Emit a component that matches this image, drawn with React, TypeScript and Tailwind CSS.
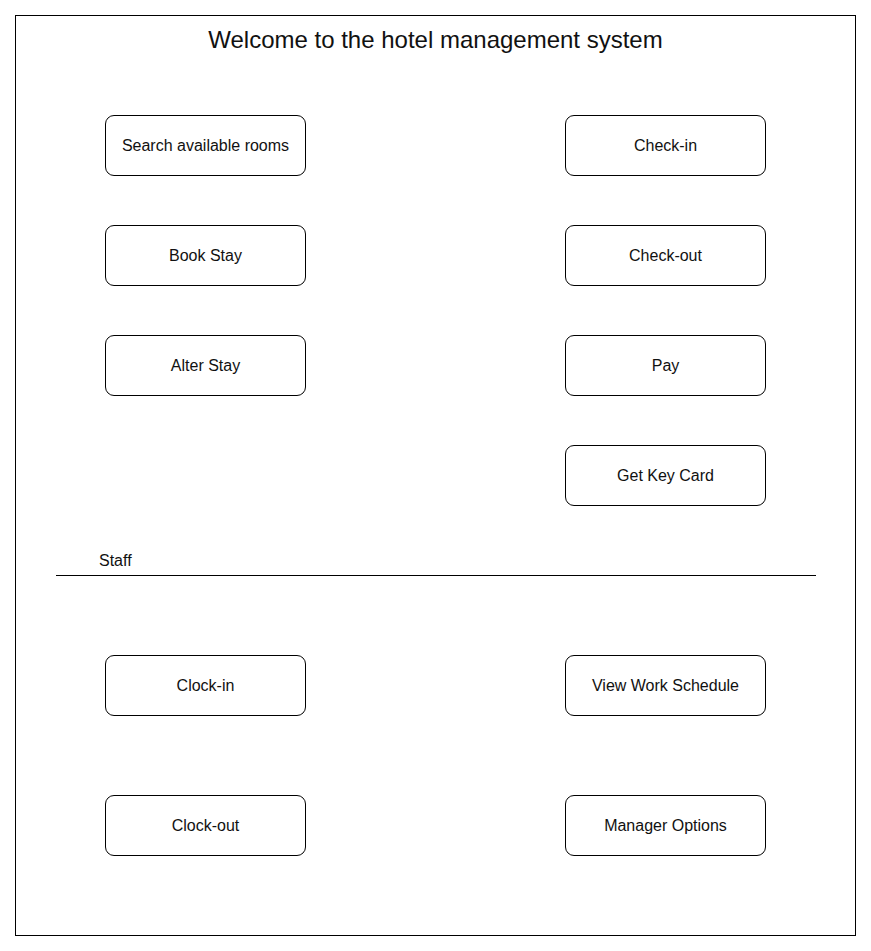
import React from "react";

function Btn({ label }: { label: string }) {
  return (
    <div className="w-[201px] h-[61px] rounded-[9px] border border-black bg-white flex items-center justify-center text-[16px] leading-[18px] text-[#111]">
      {label}
    </div>
  );
}

export default function App() {
  return (
    <div className="bg-white w-[871px] h-[951px] p-[15px]" style={{ fontFamily: '"Liberation Sans", Arial, sans-serif' }}>
      <div className="w-[841px] h-[921px] border border-black flex flex-col">
        <div className="mt-[11px] h-[26px] leading-[26px] text-[24px] text-center text-[#111]">
          Welcome to the hotel management system
        </div>
        <div className="mt-[62px] pl-[89px] grid grid-cols-[201px_201px] gap-x-[259px] gap-y-[49px]">
          <Btn label="Search available rooms" />
          <Btn label="Check-in" />
          <Btn label="Book Stay" />
          <Btn label="Check-out" />
          <Btn label="Alter Stay" />
          <Btn label="Pay" />
          <div />
          <Btn label="Get Key Card" />
        </div>
        <div className="mt-[46px] ml-[83px] h-[18px] leading-[18px] text-[16px] text-[#111]">Staff</div>
        <div className="mt-[5px] ml-[40px] w-[760px] h-px bg-black" />
        <div className="mt-[79px] pl-[89px] grid grid-cols-[201px_201px] gap-x-[259px] gap-y-[79px]">
          <Btn label="Clock-in" />
          <Btn label="View Work Schedule" />
          <Btn label="Clock-out" />
          <Btn label="Manager Options" />
        </div>
      </div>
    </div>
  );
}
